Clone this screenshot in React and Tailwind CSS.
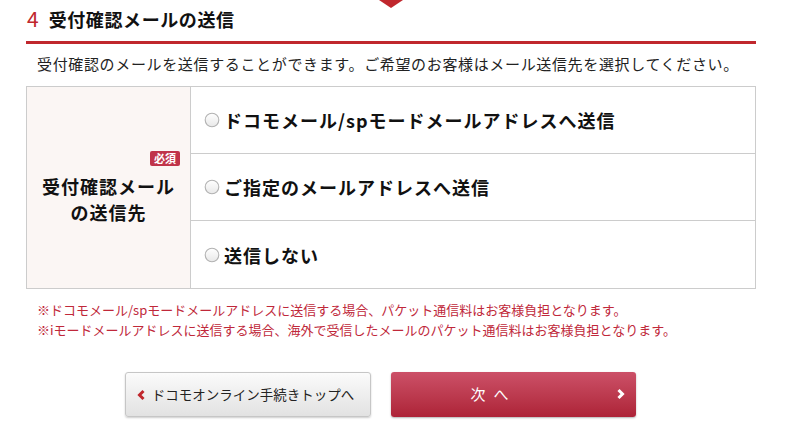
import React from "react";

const options = [
  "ドコモメール/spモードメールアドレスへ送信",
  "ご指定のメールアドレスへ送信",
  "送信しない",
];

function Radio() {
  return (
    <svg className="shrink-0" width="16" height="16" viewBox="0 0 16 16">
      <defs>
        <linearGradient id="rg" x1="0" y1="0" x2="0" y2="1">
          <stop offset="0" stopColor="#ffffff" />
          <stop offset="1" stopColor="#e8e8e8" />
        </linearGradient>
      </defs>
      <circle cx="8" cy="8" r="6.8" fill="url(#rg)" stroke="#b2b2b2" strokeWidth="1.1" />
    </svg>
  );
}

export default function App() {
  return (
    <div className="relative h-[432px] w-[785px] overflow-hidden bg-white font-['Hiragino_Kaku_Gothic_ProN','Noto_Sans_CJK_JP',sans-serif] text-[#111]">
      <div className="absolute left-[379px] top-0 h-0 w-0 border-l-[12px] border-r-[12px] border-t-[8px] border-l-transparent border-r-transparent border-t-[#c0272d]"></div>

      <div className="ml-[26px] w-[730px]">
        <div className="flex h-[44px] items-center gap-[10px] border-b-[3px] border-[#c0272d] pb-[4px] pl-[1px]">
          <span className="text-[21px] leading-none text-[#c0272d]">4</span>
          <h2 className="text-[18px] font-bold leading-none tracking-[0.6px]">受付確認メールの送信</h2>
        </div>

        <p className="mt-[9px] pl-[11px] text-[15px] leading-[22px] tracking-[0.65px] text-[#222]">
          受付確認のメールを送信することができます。ご希望のお客様はメール送信先を選択してください。
        </p>

        <div className="mt-[11px] flex border border-[#cccccc]">
          <div className="flex w-[164px] shrink-0 flex-col justify-center border-r border-[#cccccc] bg-[#fbf6f4] px-[10px]">
            <div className="flex justify-end">
              <span className="rounded-[2px] bg-[#c0344a] px-[4px] text-[11px] leading-[15px] font-bold text-white">必須</span>
            </div>
            <p className="mt-[7px] text-center text-[18px] font-bold leading-[26px] tracking-[1px]">
              受付確認メール
              <br />
              の送信先
            </p>
          </div>
          <div className="flex flex-1 flex-col">
            {options.map((label, i) => (
              <label
                key={label}
                className={
                  "flex h-[67px] items-center gap-[4px] pl-[13px] " +
                  (i < options.length - 1 ? "border-b border-[#cccccc]" : "")
                }
              >
                <Radio />
                <span className="text-[18px] font-bold leading-none tracking-[1px]">{label}</span>
              </label>
            ))}
          </div>
        </div>

        <div className="mt-[11px] pl-[11px] text-[13px] leading-[20px] text-[#c0283a]">
          <p>※ドコモメール/spモードメールアドレスに送信する場合、パケット通信料はお客様負担となります。</p>
          <p>※iモードメールアドレスに送信する場合、海外で受信したメールのパケット通信料はお客様負担となります。</p>
        </div>
      </div>

      <div className="mt-[32px] flex gap-[20px] pl-[125px]">
        <button className="flex h-[45px] w-[246px] items-center justify-center gap-[6px] rounded-[3px] border border-[#c6c6c6] bg-gradient-to-b from-[#fbfbfb] to-[#e2e2e2] pr-[6px] text-[13.5px] text-[#222] shadow-[0_1px_2px_rgba(0,0,0,0.2)]">
          <svg width="10" height="12" viewBox="0 0 10 12">
            <path d="M7.5 2 L3.5 6 L7.5 10" fill="none" stroke="#c0272d" strokeWidth="3" />
          </svg>
          ドコモオンライン手続きトップへ
        </button>
        <button className="relative flex h-[45px] w-[245px] items-center justify-center rounded-[3px] bg-gradient-to-b from-[#cc5068] to-[#ad2237] pr-[40px] text-[15px] tracking-[8px] text-white shadow-[0_1px_2px_rgba(0,0,0,0.3)]">
          次へ
          <svg className="absolute right-[10px] top-[16px]" width="10" height="12" viewBox="0 0 10 12">
            <path d="M2.5 2 L6.5 6 L2.5 10" fill="none" stroke="#ffffff" strokeWidth="3" />
          </svg>
        </button>
      </div>
    </div>
  );
}
